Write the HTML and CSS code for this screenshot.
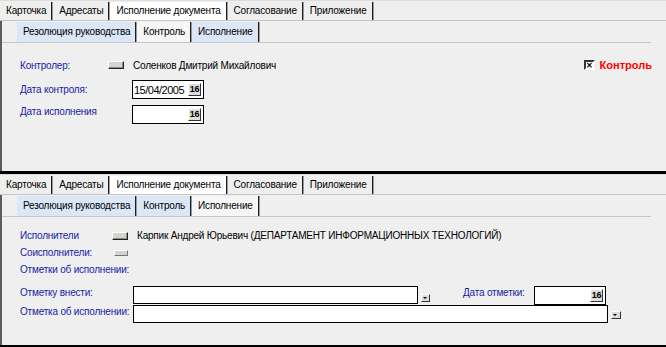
FILE: index.html
```html
<!DOCTYPE html>
<html>
<head>
  <meta charset="utf-8">
  <title>Исполнение документа</title>
  <link rel="stylesheet" href="styles.css">
</head>
<body>

<div class="Panel">
  <div class="Tabs">
    <span class="Tab">Карточка</span>
    <span class="Tab">Адресаты</span>
    <span class="Tab Tab--active">Исполнение документа</span>
    <span class="Tab">Согласование</span>
    <span class="Tab">Приложение</span>
  </div>
  <div class="Body">
    <div class="SubTabs">
      <span class="SubTab">Резолюция руководства</span>
      <span class="SubTab SubTab--active">Контроль</span>
      <span class="SubTab">Исполнение</span>
    </div>

    <div class="Form Form--control">
      <div class="Row Row--person">
        <span class="Label Label--short">Контролер:</span>
        <button class="PickButton" type="button"></button>
        <span class="Value">Соленков Дмитрий Михайлович</span>
        <label class="Check"><span class="CheckBox">✕</span>Контроль</label>
      </div>
      <div class="Row Row--date">
        <span class="Label Label--date">Дата контроля:</span>
        <div class="DateField"><span>15/04/2005</span><span class="CalButton">16</span></div>
      </div>
      <div class="Row Row--date Row--top">
        <span class="Label Label--date">Дата исполнения</span>
        <div class="DateField"><span></span><span class="CalButton">16</span></div>
      </div>
    </div>
  </div>
</div>

<div class="Panel">
  <div class="Tabs">
    <span class="Tab">Карточка</span>
    <span class="Tab">Адресаты</span>
    <span class="Tab Tab--active">Исполнение документа</span>
    <span class="Tab">Согласование</span>
    <span class="Tab">Приложение</span>
  </div>
  <div class="Body">
    <div class="SubTabs">
      <span class="SubTab">Резолюция руководства</span>
      <span class="SubTab">Контроль</span>
      <span class="SubTab SubTab--active">Исполнение</span>
    </div>

    <div class="Form Form--exec">
      <div class="Row Row--line">
        <span class="Label Label--short">Исполнители</span>
        <button class="PickButton" type="button"></button>
        <span class="Value">Карпик Андрей Юрьевич (ДЕПАРТАМЕНТ ИНФОРМАЦИОННЫХ ТЕХНОЛОГИЙ)</span>
      </div>
      <div class="Row Row--line">
        <span class="Label Label--short">Соисполнители:</span>
        <button class="PickButton PickButton--flat" type="button"></button>
      </div>
      <div class="Row Row--line">
        <span class="Label">Отметки об исполнении:</span>
      </div>
      <div class="Row Row--field Row--first">
        <span class="Label Label--field">Отметку внести:</span>
        <div class="TextField TextField--mark"></div>
        <span class="DropButton"></span>
        <span class="Label Label--mark">Дата отметки:</span>
        <div class="DateField"><span></span><span class="CalButton">16</span></div>
      </div>
      <div class="Row Row--field">
        <span class="Label Label--field">Отметка об исполнении:</span>
        <div class="TextField TextField--wide"></div>
        <span class="DropButton DropButton--low"></span>
      </div>
    </div>
  </div>
</div>

</body>
</html>
```

FILE: styles.css
```css
body {
  margin: 0;
  background-color: #efefef;
  color: #000;
  font: 10px "Liberation Sans", Arial, sans-serif;
  letter-spacing: -0.2px;
}
.Panel {
  display: flex;
  flex-direction: column;
  height: 171px;
  border-bottom: 3px solid #000;
}

/* верхние вкладки */
.Tabs {
  display: flex;
  height: 19px;
  border-top: 1px solid #dcdcdc;
  border-bottom: 1px solid #c6c6c6;
}
.Tab {
  margin: 1px 1px 0 0;
  padding: 0 5px 0 6px;
  line-height: 18px;
  border-right: 1px solid #1e1e1e;
  box-shadow: 1px 0 0 #9a9a9a;
}
.Tab--active {
  background-color: #fff;
}

.Body {
  flex: 1;
  border-left: 2px solid #5c5c5c;
}

/* вложенные вкладки */
.SubTabs {
  display: flex;
  height: 21px;
  margin-right: 15px;
  padding-left: 15px;
  border-bottom: 1px solid #c6c6c6;
}
.SubTab {
  margin: 1px 1px 0 0;
  padding: 0 5px 0 6px;
  line-height: 20px;
  background-color: #dbe7f7;
  border-right: 1px solid #1e1e1e;
  box-shadow: 1px 0 0 #9a9a9a;
}
.SubTab--active {
  background-color: #f6f6f6;
}

/* формы */
.Form {
  padding-left: 18px;
  padding-right: 14px;
}
.Form--control {
  padding-top: 15px;
}
.Form--exec {
  padding-top: 10px;
}
.Row {
  display: flex;
  align-items: center;
}
.Row--person {
  height: 14px;
}
.Row--date {
  height: 19px;
  margin-top: 8px;
}
.Row--top {
  align-items: flex-start;
  margin-top: 6px;
}
.Row--line {
  height: 17px;
}
.Row--field {
  height: 18px;
  margin-top: 1px;
  align-items: flex-start;
}
.Row--first {
  margin-top: 8px;
}
.Label {
  color: #1a1aa8;
  white-space: nowrap;
}
.Label--short {
  width: 88px;
}
.Form--exec .Label--short {
  width: 92px;
}
.Label--date {
  width: 112px;
}
.Row--top .Label--date {
  padding-top: 1px;
}
.Label--field {
  width: 113px;
  padding-top: 1px;
}
.Label--mark {
  width: 71px;
  margin-left: 33px;
  padding-top: 1px;
}
.Value {
  margin-left: 9px;
}

.PickButton {
  box-sizing: border-box;
  width: 16px;
  height: 8px;
  padding: 0;
  background-color: #d6d3cc;
  border: 1px solid;
  border-color: #fff #222 #222 #fff;
  box-shadow: inset -1px -1px 0 #8c8c8c;
}
.PickButton--flat {
  width: 14px;
  height: 6px;
  margin-left: 2px;
  border-color: #fff #777 #777 #fff;
  box-shadow: none;
}

.Check {
  display: flex;
  align-items: center;
  margin-left: auto;
  color: #f00;
  font-size: 11px;
  font-weight: bold;
  letter-spacing: 0;
}
.CheckBox {
  box-sizing: border-box;
  width: 11px;
  height: 10px;
  margin-right: 5px;
  border: 2px solid;
  border-color: #333 #fff #fff #333;
  background-color: #fff;
  color: #000;
  font-size: 8px;
  font-weight: bold;
  line-height: 7px;
  text-align: center;
}

.DateField {
  box-sizing: border-box;
  display: flex;
  align-items: center;
  justify-content: space-between;
  width: 72px;
  height: 19px;
  padding: 0 2px 0 1px;
  background-color: #fff;
  border: 1px solid #000;
  font-size: 11px;
  letter-spacing: -0.5px;
}
.CalButton {
  box-sizing: border-box;
  width: 13px;
  height: 13px;
  background-color: #dedede;
  border: 1px solid;
  border-color: #fff #333 #333 #fff;
  font-size: 9px;
  font-weight: bold;
  line-height: 11px;
  letter-spacing: -0.3px;
  text-align: center;
}

.TextField {
  box-sizing: border-box;
  height: 18px;
  background-color: #fff;
  border: 1px solid #000;
}
.TextField--mark {
  width: 285px;
}
.TextField--wide {
  width: 475px;
}
.DropButton {
  box-sizing: border-box;
  position: relative;
  width: 9px;
  height: 8px;
  margin: 8px 0 0 3px;
  background-color: #dcdcdc;
  border: 1px solid;
  border-color: #fff #333 #333 #fff;
}
.DropButton--low {
  width: 10px;
  margin-top: 6px;
}
.DropButton::after {
  content: "";
  position: absolute;
  left: 1px;
  top: 2px;
  border: 2px solid transparent;
  border-top: 2px solid #000;
}
```
